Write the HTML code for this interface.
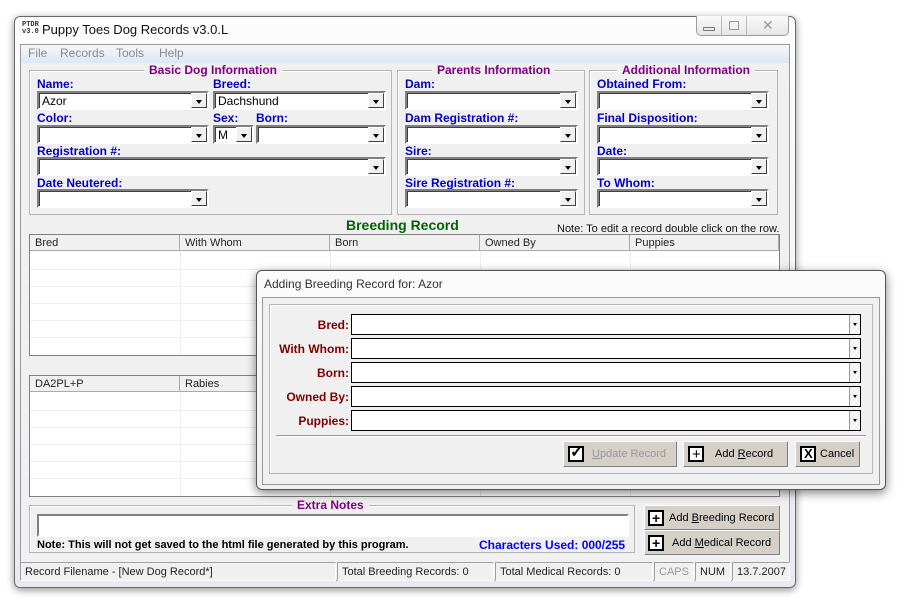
<!DOCTYPE html>
<html><head><style>
*{box-sizing:border-box;margin:0;padding:0}
body{width:904px;height:605px;background:#fff;position:relative;overflow:hidden;font-family:"Liberation Sans",sans-serif;font-size:11px;color:#000}
.a{position:absolute;white-space:nowrap}
.win{left:14px;top:16px;width:782px;height:572px;border:1px solid #6a6a6a;border-radius:6px;background:linear-gradient(#fdfdfd,#e8eaee);box-shadow:0 2px 8px rgba(0,0,0,.45)}
.client{left:20px;top:44px;width:770px;height:537px;background:#f0f0f0;border:1px solid #999}
.menu{left:21px;top:45px;width:768px;height:18px;background:linear-gradient(#f4f6fb,#dfe6f3);color:#8a8a8a;font-size:12px}
.grp{border:1px solid #b5b5b5;box-shadow:inset 1px 1px 0 #fff}
.gt{position:absolute;top:-8px;background:#f0f0f0;padding:0 5px;color:#800080;font-weight:bold;font-size:12px;white-space:nowrap}
.lb{position:absolute;color:#0000c0;font-weight:bold;font-size:12px;white-space:nowrap}
.cb{position:absolute;height:19px;background:#fff;border:2px solid;border-color:#808080 #fff #fff #808080;box-shadow:inset 1px 1px 0 #404040;font-size:12px;padding:1px 3px}
.cb i{position:absolute;right:0;top:0;width:16px;height:15px;background:#f0f0f0;border:1px solid;border-color:#fff #404040 #404040 #fff}
.cb i:after{content:"";position:absolute;left:4px;top:6px;border:3px solid transparent;border-top:4px solid #000;border-bottom:0}
.tbl{position:absolute;background:#fff;border:1px solid #808080}
.th{position:absolute;top:0;height:16px;background:#f0f0f0;border-right:1px solid #aaa;border-bottom:1px solid #aaa;padding:2px 5px;font-size:11px;color:#222}
.row{position:absolute;left:0;right:0;height:1px;background:#eee}
.col{position:absolute;top:16px;bottom:0;width:1px;background:#eee}
.btn{position:absolute;background:#d4d0c8;border:1px solid;border-color:#fff #808080 #808080 #fff;font-size:11px;color:#000}
.btn span{white-space:nowrap}
.bx{position:absolute;left:4px;top:4px;width:16px;height:16px;border:2px solid #000;background:#fff}
.sb{position:absolute;top:562px;height:19px;border:1px solid;border-color:#a0a0a0 #fff #fff #a0a0a0;font-size:11px;padding:3px 4px;color:#222;white-space:nowrap}
.dl{position:absolute;color:#800000;font-weight:bold;font-size:12px;text-align:right;width:80px;left:269px}
.dc{position:absolute;left:351px;width:510px;height:21px;background:#fff;border:1px solid #000}
.dc i{position:absolute;right:0;top:0;bottom:0;width:11px;border-left:1px solid #999;background:#f4f4f4}
.dc i:after{content:"";position:absolute;left:3px;top:8px;border:2px solid transparent;border-top:3px solid #000;border-bottom:0}
</style></head><body>
<div class="a win"></div>
<div class="a" style="left:22px;top:22px;font-size:7px;line-height:7px;font-weight:bold;color:#333;font-family:'Liberation Mono',monospace">PTDR<br>v3.0</div>
<div class="a" style="left:42px;top:22px;font-size:13px;color:#111">Puppy Toes Dog Records v3.0.L</div>
<div class="a" style="left:696px;top:16px;width:93px;height:20px;border:1px solid #999;border-top:0;border-radius:0 0 5px 5px;background:linear-gradient(#fafafa,#e6e6e6)"></div>
<div class="a" style="left:721px;top:16px;width:1px;height:20px;background:#bbb"></div>
<div class="a" style="left:746px;top:16px;width:1px;height:20px;background:#bbb"></div>
<div class="a" style="left:703px;top:27px;width:12px;height:4px;border:1px solid #777;border-radius:1px"></div>
<div class="a" style="left:729px;top:21px;width:10px;height:9px;border:1px solid #999"></div>
<div class="a" style="left:762px;top:17px;font-size:14px;color:#999">✕</div>
<div class="a client"></div>
<div class="a menu"><span class="a" style="left:7px;top:1px">File</span><span class="a" style="left:39px;top:1px">Records</span><span class="a" style="left:95px;top:1px">Tools</span><span class="a" style="left:138px;top:1px">Help</span></div>

<div class="a grp" style="left:29px;top:70px;width:363px;height:145px"><div class="gt" style="left:114px">Basic Dog Information</div></div>
<div class="a grp" style="left:397px;top:70px;width:188px;height:145px"><div class="gt" style="left:34px">Parents Information</div></div>
<div class="a grp" style="left:589px;top:70px;width:189px;height:145px"><div class="gt" style="left:27px">Additional Information</div></div>

<div class="lb" style="left:37px;top:77px">Name:</div><div class="cb" style="left:37px;top:91px;width:172px">Azor<i></i></div>
<div class="lb" style="left:213px;top:77px">Breed:</div><div class="cb" style="left:213px;top:91px;width:173px">Dachshund<i></i></div>
<div class="lb" style="left:37px;top:111px">Color:</div><div class="cb" style="left:37px;top:125px;width:172px"><i></i></div>
<div class="lb" style="left:213px;top:111px">Sex:</div><div class="cb" style="left:213px;top:125px;width:41px">M<i></i></div>
<div class="lb" style="left:256px;top:111px">Born:</div><div class="cb" style="left:256px;top:125px;width:130px"><i></i></div>
<div class="lb" style="left:37px;top:144px">Registration #:</div><div class="cb" style="left:37px;top:157px;width:349px"><i></i></div>
<div class="lb" style="left:37px;top:176px">Date Neutered:</div><div class="cb" style="left:37px;top:189px;width:172px"><i></i></div>

<div class="lb" style="left:405px;top:77px">Dam:</div><div class="cb" style="left:405px;top:91px;width:173px"><i></i></div>
<div class="lb" style="left:405px;top:111px">Dam Registration #:</div><div class="cb" style="left:405px;top:125px;width:173px"><i></i></div>
<div class="lb" style="left:405px;top:144px">Sire:</div><div class="cb" style="left:405px;top:157px;width:173px"><i></i></div>
<div class="lb" style="left:405px;top:176px">Sire Registration #:</div><div class="cb" style="left:405px;top:189px;width:173px"><i></i></div>

<div class="lb" style="left:597px;top:77px">Obtained From:</div><div class="cb" style="left:597px;top:91px;width:172px"><i></i></div>
<div class="lb" style="left:597px;top:111px">Final Disposition:</div><div class="cb" style="left:597px;top:125px;width:172px"><i></i></div>
<div class="lb" style="left:597px;top:144px">Date:</div><div class="cb" style="left:597px;top:157px;width:172px"><i></i></div>
<div class="lb" style="left:597px;top:176px">To Whom:</div><div class="cb" style="left:597px;top:189px;width:172px"><i></i></div>

<div class="a" style="left:346px;top:217px;color:#006400;font-weight:bold;font-size:14px">Breeding Record</div>
<div class="a" style="left:557px;top:223px;font-size:11px;color:#111">Note: To edit a record double click on the row.</div>

<div class="tbl" style="left:29px;top:234px;width:751px;height:122px">
<div class="th" style="left:0;width:150px">Bred</div><div class="th" style="left:150px;width:150px">With Whom</div><div class="th" style="left:300px;width:150px">Born</div><div class="th" style="left:450px;width:150px">Owned By</div><div class="th" style="left:600px;width:149px">Puppies</div>
<div class="col" style="left:150px"></div><div class="col" style="left:300px"></div><div class="col" style="left:450px"></div><div class="col" style="left:600px"></div>
<div class="row" style="top:34px"></div><div class="row" style="top:51px"></div><div class="row" style="top:68px"></div><div class="row" style="top:85px"></div><div class="row" style="top:102px"></div>
</div>
<div class="tbl" style="left:29px;top:375px;width:751px;height:122px">
<div class="th" style="left:0;width:150px">DA2PL+P</div><div class="th" style="left:150px;width:150px">Rabies</div><div class="th" style="left:300px;width:150px"></div><div class="th" style="left:450px;width:150px"></div><div class="th" style="left:600px;width:149px"></div>
<div class="col" style="left:150px"></div><div class="col" style="left:300px"></div><div class="col" style="left:450px"></div><div class="col" style="left:600px"></div>
<div class="row" style="top:34px"></div><div class="row" style="top:51px"></div><div class="row" style="top:68px"></div><div class="row" style="top:85px"></div><div class="row" style="top:102px"></div>
</div>

<div class="a grp" style="left:29px;top:505px;width:606px;height:48px"><div class="gt" style="left:262px">Extra Notes</div></div>
<div class="a" style="left:37px;top:514px;width:592px;height:23px;background:#fff;border:2px solid;border-color:#808080 #fff #fff #808080"></div>
<div class="a" style="left:37px;top:539px;font-weight:bold;font-size:11px">Note: This will not get saved to the html file generated by this program.</div>
<div class="a" style="left:479px;top:538px;font-weight:bold;font-size:12px;color:#0000ff">Characters Used: 000/255</div>
<div class="btn" style="left:644px;top:505px;width:136px;height:25px"><div class="bx" style="left:3px"></div><span class="a" style="left:7px;top:4px;font-weight:bold;font-size:14px">+</span><span class="a" style="left:24px;top:6px">Add <u>B</u>reeding Record</span></div>
<div class="btn" style="left:644px;top:530px;width:136px;height:25px"><div class="bx" style="left:3px"></div><span class="a" style="left:7px;top:4px;font-weight:bold;font-size:14px">+</span><span class="a" style="left:27px;top:6px">Add <u>M</u>edical Record</span></div>

<div class="sb" style="left:20px;top:562px;width:316px">Record Filename - [New Dog Record*]</div>
<div class="sb" style="left:337px;width:157px">Total Breeding Records: 0</div>
<div class="sb" style="left:495px;width:158px">Total Medical Records: 0</div>
<div class="sb" style="left:654px;width:40px;color:#999">CAPS</div>
<div class="sb" style="left:695px;width:36px">NUM</div>
<div class="sb" style="left:732px;width:58px">13.7.2007</div>

<!-- dialog -->
<div class="a" style="left:256px;top:270px;width:630px;height:220px;border:1px solid #555;border-radius:6px;background:linear-gradient(#fbfbfb,#eef0f2);box-shadow:0 3px 10px rgba(0,0,0,.5)"></div>
<div class="a" style="left:264px;top:277px;font-size:12px;color:#333">Adding Breeding Record for: Azor</div>
<div class="a" style="left:262px;top:297px;width:618px;height:188px;background:#f0f0f0;border:1px solid #999"></div>
<div class="a grp" style="left:269px;top:304px;width:604px;height:170px"></div>
<div class="dl" style="top:318px">Bred:</div><div class="dc" style="top:314px"><i></i></div>
<div class="dl" style="top:342px">With Whom:</div><div class="dc" style="top:338px"><i></i></div>
<div class="dl" style="top:366px">Born:</div><div class="dc" style="top:362px"><i></i></div>
<div class="dl" style="top:390px">Owned By:</div><div class="dc" style="top:386px"><i></i></div>
<div class="dl" style="top:414px">Puppies:</div><div class="dc" style="top:410px"><i></i></div>
<div class="a" style="left:276px;top:435px;width:590px;height:1px;background:#999;box-shadow:0 1px 0 #fff"></div>
<div class="btn" style="left:563px;top:441px;width:114px;height:26px"><div class="bx"></div><span class="a" style="left:6px;top:0;font-size:16px;font-weight:bold">✓</span><span class="a" style="left:28px;top:6px;color:#999"><u>U</u>pdate Record</span></div>
<div class="btn" style="left:683px;top:441px;width:105px;height:26px"><div class="bx"></div><span class="a" style="left:8px;top:4px;font-size:15px">+</span><span class="a" style="left:31px;top:6px">Add <u>R</u>ecord</span></div>
<div class="btn" style="left:795px;top:441px;width:65px;height:26px"><div class="bx"></div><span class="a" style="left:8px;top:4px;font-size:13px;font-weight:bold">X</span><span class="a" style="left:24px;top:6px">Cancel</span></div>
</body></html>
